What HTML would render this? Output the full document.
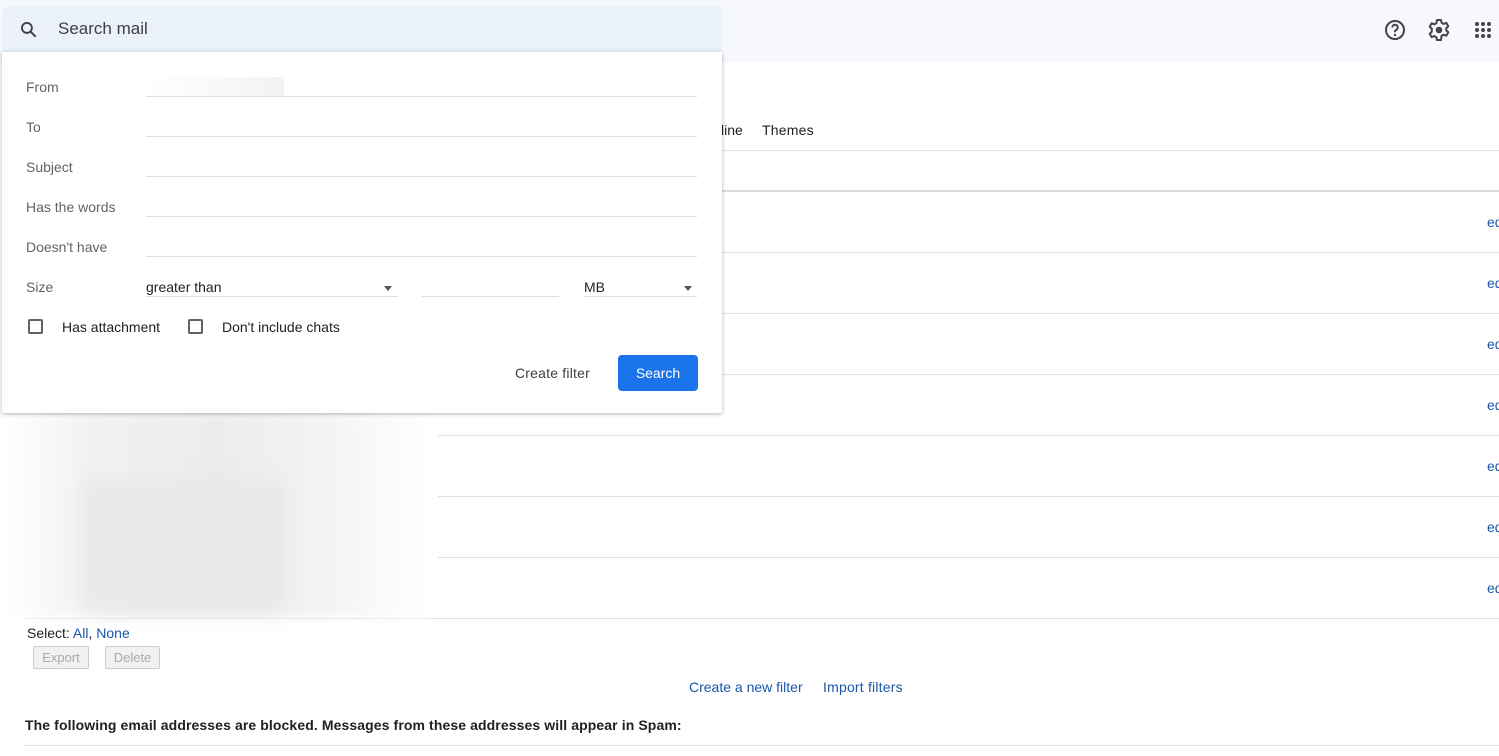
<!DOCTYPE html>
<html><head><meta charset="utf-8"><style>
*{box-sizing:border-box;margin:0;padding:0}
body{width:1499px;height:756px;overflow:hidden;background:#fff;font-family:"Liberation Sans",Arial,sans-serif;position:relative;color:#202124}
.hdr{position:absolute;left:0;top:0;width:1499px;height:62px;background:#f6f8fc}
.sb{position:absolute;left:2px;top:6px;width:720px;height:47px;background:#eaf1fb;border-radius:8px 8px 0 0}
.sb span{position:absolute;left:56px;top:13px;font-size:17px;color:#3c4043}
.dd{position:absolute;left:2px;top:52px;width:720px;height:361px;background:#fff;box-shadow:0 1px 4px rgba(0,0,0,.3)}
.lbl{position:absolute;left:24px;font-size:14px;color:#5f6368}
.ln{position:absolute;left:144px;width:551px;height:1px;background:#e0e0e0}
.abs{position:absolute}
.hl{position:absolute;left:438px;width:1061px;height:1px;background:#e0e0e0}
.ed{position:absolute;left:1487px;font-size:14px;color:#1a57a8}
.cb{position:absolute;width:15px;height:15px;border:2px solid #5f6368;border-radius:2px}
.btn{position:absolute;height:23px;border:1px solid #ccc;background:#f1f1f1;color:#aaa;font-size:13px;text-align:center;line-height:21px;border-radius:2px}
</style></head><body>
<div class="hdr"></div>
<div class="sb">
<svg class="abs" style="left:17px;top:14px" width="20" height="20" viewBox="0 0 24 24"><circle cx="9.5" cy="9.5" r="6" fill="none" stroke="#3c4043" stroke-width="2.2"/><path d="M14 14l6 6" stroke="#3c4043" stroke-width="2.4"/></svg>
<span>Search mail</span></div>
<svg class="abs" style="left:1383px;top:18px" width="24" height="24" viewBox="0 0 24 24"><circle cx="12" cy="12" r="9" fill="none" stroke="#444" stroke-width="2"/><path d="M9.3 9.5a2.7 2.7 0 1 1 3.8 2.4c-.8.4-1.1.9-1.1 1.8v.6" fill="none" stroke="#444" stroke-width="2"/><circle cx="12" cy="17" r="1.2" fill="#444"/></svg>
<svg class="abs" style="left:1427px;top:18px" width="24" height="24" viewBox="0 0 24 24"><path d="M10 2h4l.6 2.8 2 1.1 2.7-1 2 3.4-2.1 1.9v2.2l2.1 1.9-2 3.4-2.7-1-2 1.1L14 22h-4l-.6-2.8-2-1.1-2.7 1-2-3.4 2.1-1.9V10.6L2.7 8.7l2-3.4 2.7 1 2-1.1z" fill="none" stroke="#444" stroke-width="2" stroke-linejoin="round"/><circle cx="12" cy="12" r="3.3" fill="#444"/></svg>
<svg class="abs" style="left:1474px;top:21px" width="18" height="18" viewBox="0 0 18 18" fill="#444"><circle cx="3" cy="3" r="2"/><circle cx="9" cy="3" r="2"/><circle cx="15" cy="3" r="2"/><circle cx="3" cy="9" r="2"/><circle cx="9" cy="9" r="2"/><circle cx="15" cy="9" r="2"/><circle cx="3" cy="15" r="2"/><circle cx="9" cy="15" r="2"/><circle cx="15" cy="15" r="2"/></svg>

<div class="abs" style="left:721px;top:122px;font-size:14px;color:#202124">line</div>
<div class="abs" style="left:762px;top:122px;font-size:14px;color:#202124;letter-spacing:.2px">Themes</div>
<div class="hl" style="top:150px"></div>
<div class="hl" style="top:190px;height:2px;background:#ddd"></div>
<div class="hl" style="top:252px"></div><div class="hl" style="top:313px"></div><div class="hl" style="top:374px"></div><div class="hl" style="top:435px"></div><div class="hl" style="top:496px"></div><div class="hl" style="top:557px"></div>
<div class="abs" style="left:25px;top:618px;width:1474px;height:1px;background:#e0e0e0"></div>
<div class="ed" style="top:214px">ed</div><div class="ed" style="top:275px">ed</div><div class="ed" style="top:336px">ed</div><div class="ed" style="top:397px">ed</div><div class="ed" style="top:458px">ed</div><div class="ed" style="top:519px">ed</div><div class="ed" style="top:580px">ed</div>

<div class="abs" style="left:5px;top:412px;width:425px;height:205px;background:linear-gradient(90deg,#fff 0%,#f1f1f1 20%,#ececec 50%,#f3f3f3 75%,#fff 100%);filter:blur(6px)"></div>
<div class="abs" style="left:85px;top:480px;width:200px;height:130px;background:#e8e8e8;filter:blur(8px)"></div>

<div class="dd">
<div class="lbl" style="top:27px">From</div><div class="abs" style="left:144px;top:25px;width:138px;height:20px;background:linear-gradient(90deg,#fff,#f1f3f4)"></div><div class="ln" style="top:44px"></div>
<div class="lbl" style="top:67px">To</div><div class="ln" style="top:84px"></div>
<div class="lbl" style="top:107px">Subject</div><div class="ln" style="top:124px"></div>
<div class="lbl" style="top:147px">Has the words</div><div class="ln" style="top:164px"></div>
<div class="lbl" style="top:187px">Doesn't have</div><div class="ln" style="top:204px"></div>
<div class="lbl" style="top:227px">Size</div>
<div class="abs" style="left:144px;top:227px;font-size:14px;color:#202124">greater than</div>
<div class="abs" style="left:382px;top:234px;border:4px solid transparent;border-top:5px solid #555"></div>
<div class="abs" style="left:144px;top:244px;width:252px;height:1px;background:#e0e0e0"></div>
<div class="abs" style="left:420px;top:244px;width:137px;height:1px;background:#e0e0e0"></div>
<div class="abs" style="left:582px;top:227px;font-size:14px;color:#202124">MB</div>
<div class="abs" style="left:682px;top:234px;border:4px solid transparent;border-top:5px solid #555"></div>
<div class="abs" style="left:582px;top:244px;width:113px;height:1px;background:#e0e0e0"></div>
<div class="cb" style="left:26px;top:267px"></div><div class="abs" style="left:60px;top:267px;font-size:14px">Has attachment</div>
<div class="cb" style="left:186px;top:267px"></div><div class="abs" style="left:220px;top:267px;font-size:14px">Don't include chats</div>
<div class="abs" style="left:513px;top:313px;font-size:14px;color:#3c4043;letter-spacing:.2px">Create filter</div>
<div class="abs" style="left:616px;top:303px;width:80px;height:36px;background:#1a73e8;border-radius:4px;color:#fff;font-size:14px;text-align:center;line-height:36px">Search</div>
</div>

<div class="abs" style="left:27px;top:625px;font-size:14px">Select: <span style="color:#1a57a8">All</span>, <span style="color:#1a57a8">None</span></div>
<div class="btn" style="left:33px;top:646px;width:56px">Export</div>
<div class="btn" style="left:105px;top:646px;width:55px">Delete</div>
<div class="abs" style="left:689px;top:679px;font-size:14px;color:#1a57a8">Create a new filter</div>
<div class="abs" style="left:823px;top:679px;font-size:14px;color:#1a57a8;letter-spacing:.2px">Import filters</div>
<div class="abs" style="left:25px;top:717px;font-size:14px;font-weight:bold;letter-spacing:.1px">The following email addresses are blocked. Messages from these addresses will appear in Spam:</div>
<div class="abs" style="left:25px;top:745px;width:1474px;height:1px;background:#e0e0e0"></div>
</body></html>
